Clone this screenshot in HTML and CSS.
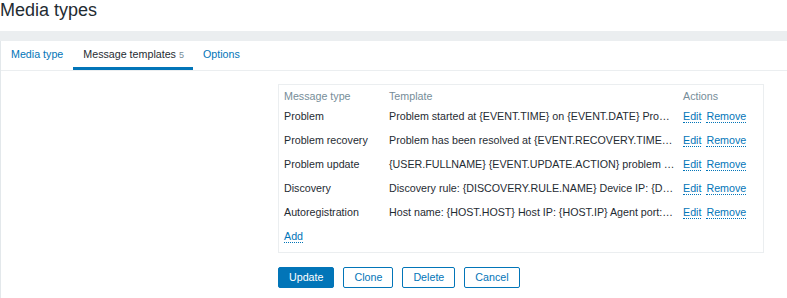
FILE: index.html
```html
<!DOCTYPE html>
<html lang="en">
<head>
  <meta charset="UTF-8" />
  <title>Media types</title>
  <link rel="stylesheet" href="styles.css">
</head>
<body>
  <header class="page-header">
    <h1>Media types</h1>
  </header>

  <main class="wrapper">
    <div class="tab-box">
      <ul class="tabs">
        <li><a href="#">Media type</a></li>
        <li class="active"><a href="#">Message templates<span class="count">5</span></a></li>
        <li><a href="#">Options</a></li>
      </ul>

      <form class="form-grid">
        <div class="form-label"></div>
        <div class="form-field">
          <div class="table-box">
            <table class="list-table">
              <colgroup>
                <col class="col-type">
                <col class="col-template">
                <col>
              </colgroup>
              <thead>
                <tr>
                  <th>Message type</th>
                  <th>Template</th>
                  <th>Actions</th>
                </tr>
              </thead>
              <tbody id="template-rows">
                <!-- filled by script -->
              </tbody>
              <tfoot>
                <tr>
                  <td colspan="3"><a href="#" class="link-action">Add</a></td>
                </tr>
              </tfoot>
            </table>
          </div>

          <div class="form-actions">
            <button type="button" class="btn-main">Update</button>
            <button type="button" class="btn-alt">Clone</button>
            <button type="button" class="btn-alt">Delete</button>
            <button type="button" class="btn-alt">Cancel</button>
          </div>
        </div>
      </form>
    </div>
  </main>

  <script>
    // template previews, already shortened the way the list shows them
    const templates = [
      ['Problem', 'Problem started at {EVENT.TIME} on {EVENT.DATE} Pro…'],
      ['Problem recovery', 'Problem has been resolved at {EVENT.RECOVERY.TIME…'],
      ['Problem update', '{USER.FULLNAME} {EVENT.UPDATE.ACTION} problem …'],
      ['Discovery', 'Discovery rule: {DISCOVERY.RULE.NAME} Device IP: {D…'],
      ['Autoregistration', 'Host name: {HOST.HOST} Host IP: {HOST.IP} Agent port:…']
    ];

    const rows = document.getElementById('template-rows');
    templates.forEach(([type, text]) => {
      const tr = document.createElement('tr');
      tr.innerHTML = `
        <td>${type}</td>
        <td class="cell-template">${text}</td>
        <td><a href="#" class="link-action">Edit</a><a href="#" class="link-action action-gap">Remove</a></td>
      `;
      rows.appendChild(tr);
    });
  </script>
</body>
</html>
```

FILE: styles.css
```css
body {
  margin: 0;
  font-family: "Liberation Sans", Arial, sans-serif;
  font-size: 10.7px;
  line-height: 14px;
  color: #1f2c33;
  background-color: #ffffff;
}
a {
  color: #0275b8;
  text-decoration: none;
}
.page-header {
  height: 31px;
  background: #ffffff;
}
.page-header h1 {
  margin: 0;
  font-size: 18px;
  line-height: 21px;
  font-weight: normal;
}
.wrapper {
  background-color: #ebeef0;
  padding-top: 10px;
}
.tab-box {
  background: #ffffff;
  border-left: 1px solid #e3e8eb;
  min-height: 257px;
}
.tabs {
  display: flex;
  margin: 0;
  padding: 0;
  list-style: none;
  border-bottom: 1px solid #ebeef0;
}
.tabs li a {
  display: block;
  padding: 6px 10px 5px;
  border-bottom: 3px solid transparent;
}
.tabs li.active a {
  padding-right: 9px;
  color: #1f2c33;
  border-bottom-color: #0275b8;
}
.count {
  margin-left: 3px;
  font-size: 9px;
  color: #768d99;
}
.form-grid {
  display: grid;
  grid-template-columns: 267px 486px;
  column-gap: 10px;
  padding-top: 13px;
}
.table-box {
  box-sizing: border-box;
  width: 486px;
  border: 1px solid #ebeef0;
  padding-bottom: 4px;
}
.list-table {
  width: 100%;
  table-layout: fixed;
  border-collapse: collapse;
}
.col-type {
  width: 105px;
}
.col-template {
  width: 294px;
}
.list-table th {
  padding: 4px 5px 1px;
  text-align: left;
  font-weight: normal;
  color: #768d99;
}
.list-table td {
  padding: 5px 5px;
  white-space: nowrap;
}
.list-table td.cell-template {
  padding-right: 1px;
  overflow: hidden;
}
.link-action {
  border-bottom: 1px dotted #0275b8;
}
.action-gap {
  margin-left: 5px;
}
.form-actions {
  display: flex;
  gap: 9px;
  margin-top: 14px;
}
.form-actions button {
  height: 21px;
  padding: 0 10px;
  font-family: inherit;
  font-size: 10.7px;
  line-height: 19px;
  border: 1px solid #0275b8;
  border-radius: 2px;
  cursor: pointer;
}
.btn-main {
  background-color: #0275b8;
  color: #ffffff;
}
.btn-alt {
  background-color: #ffffff;
  color: #0275b8;
}
```
